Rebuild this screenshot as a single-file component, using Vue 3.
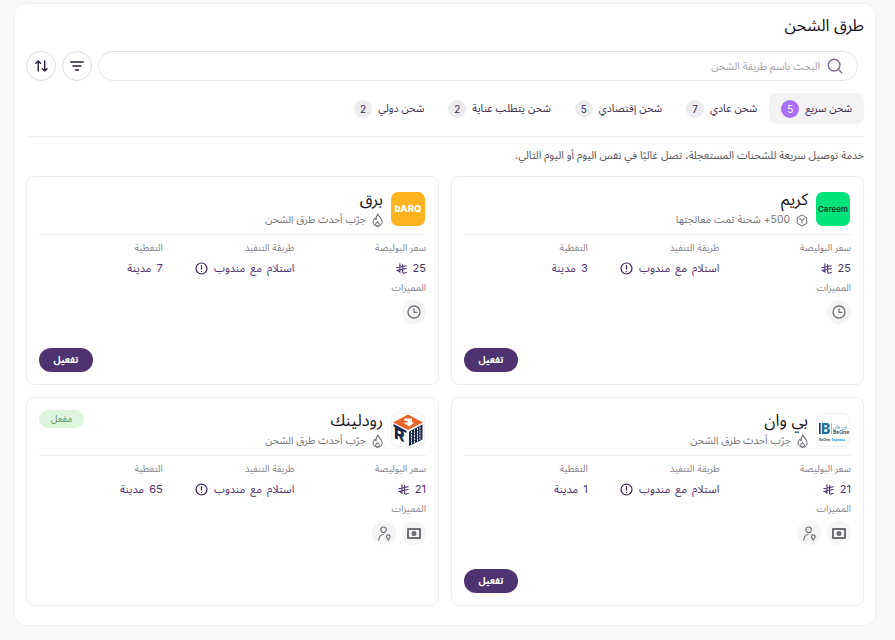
<template>
  <div class="page" dir="rtl">
    <section class="panel">
      <h1 class="title">طرق الشحن</h1>

      <div class="toolbar">
        <label class="search">
          <svg class="search-icon" viewBox="0 0 18 18" width="16" height="16" fill="none" stroke="#7d6b90" stroke-width="1.500" stroke-linecap="round">
            <circle cx="8" cy="8" r="6.600" />
            <path d="M13 13l3.600 3.600" />
          </svg>
          <input type="text" placeholder="البحث باسم طريقة الشحن" />
        </label>
        <button class="round-btn" type="button" aria-label="تصفية">
          <svg viewBox="0 0 14 10" width="14" height="10" fill="none" stroke="#2a1c38" stroke-width="1.300" stroke-linecap="round">
            <path d="M.7 1h12.600M3 5h8M5.500 9h3" />
          </svg>
        </button>
        <button class="round-btn" type="button" aria-label="ترتيب">
          <svg viewBox="0 0 14 13" width="13" height="12" fill="none" stroke="#2a1c38" stroke-width="1.500" stroke-linecap="round" stroke-linejoin="round">
            <path d="M3.500 12V1M1 3.500L3.500 1 6 3.500M10.500 1v11M8 9.500l2.500 2.500 2.500-2.500" />
          </svg>
        </button>
      </div>

      <nav class="tabs">
        <div v-for="tab in tabs" :key="tab.label" class="tab" :class="{ active: tab.active }">
          <span>{{ tab.label }}</span>
          <span class="count">{{ tab.count }}</span>
        </div>
      </nav>

      <p class="desc">خدمة توصيل سريعة للشحنات المستعجلة، تصل غالبًا في نفس اليوم أو اليوم التالي.</p>

      <div class="cards">
        <article v-for="card in cards" :key="card.name" class="card">
          <header class="card-head">
            <div class="logo" :class="card.logo">
              <template v-if="card.logo === 'careem'">Careem</template>
              <template v-else-if="card.logo === 'barq'">bARQ</template>
              <template v-else-if="card.logo === 'beone'">
                <svg viewBox="0 0 34 34" width="34" height="34">
                  <rect x="3" y="10" width="1.600" height="11" fill="#1d3c57" />
                  <text x="5" y="21" font-size="14" font-weight="800" fill="#1e6f9e">B</text>
                  <path d="M15.500 10v11" stroke="#777" stroke-width=".5" />
                  <text x="31" y="14.500" font-size="5.500" text-anchor="end" fill="#1e86b8">بي وان</text>
                  <text x="17" y="20.500" font-size="5" font-weight="600" fill="#2d3c4a">BeOne</text>
                  <text x="3" y="27.500" font-size="3.400" font-weight="600" fill="#2d3c4a">BeOne</text>
                  <text x="15.500" y="27.500" font-size="3.400" font-weight="700" fill="#27a0c9">Express</text>
                </svg>
              </template>
              <template v-else>
                <svg viewBox="0 0 34 34" width="34" height="34">
                  <path d="M17 1.500L32 9.500 17 17 2 9.500z" fill="#e8662a" />
                  <path d="M13.500 5.500h7.500v4h2.500L18 13.500l-5.500-4h4V8h-3z" fill="#fff" />
                  <text transform="matrix(1 .42 0 1 3 25)" font-size="16" font-weight="800" fill="#18264b" direction="ltr">R</text>
                  <path d="M2.500 11l13 6.700v2.400L2.500 13.500z" fill="#18264b" />
                  <path d="M18 18.500l13.500-7v15L18 33z" fill="#18264b" />
                  <path d="M20.500 18v13.500M23.500 16.500V30M26.500 15v13.500M29 13.800v13" stroke="#fff" stroke-width="1" stroke-dasharray="2 .8" />
                </svg>
              </template>
            </div>
            <div class="head-text">
              <h2 class="name">{{ card.name }}</h2>
              <div class="sub">
                <svg v-if="card.box" viewBox="0 0 14 15" width="12" height="13" fill="none" stroke="#6f6f76" stroke-width="1.200" stroke-linejoin="round">
                  <path d="M7 1l5.500 3.200v6.600L7 14l-5.500-3.200V4.200z" />
                  <path d="M3.800 5L7 7l3.200-2M7 7v4" />
                </svg>
                <svg v-else class="flame" viewBox="1 0 12 16" width="11" height="14" fill="none" stroke="#6f6f76" stroke-width="1.200" stroke-linejoin="round">
                  <path d="M7.500 1c.3 3 4.800 5 4.800 9a5.200 5.200 0 0 1-10.400 0C1.900 8.200 3 7 4 6c.2 1 .7 1.500 1.300 1.800C5.200 5.500 6 3 7.500 1z" />
                  <path d="M7 15c-1.300 0-2.200-1-2.200-2.200 0-1 .9-1.700 2.200-3 1.300 1.300 2.200 2 2.200 3C9.200 14 8.300 15 7 15z" />
                </svg>
                <span>{{ card.sub }}</span>
              </div>
            </div>
            <span v-if="card.enabled" class="badge">مفعل</span>
          </header>

          <div class="stats">
            <div class="stat">
              <span class="label">سعر البوليصة</span>
              <span class="value price">
                <span>{{ card.price }}</span>
                <svg viewBox="0 0 14 14" width="11" height="11" fill="none" stroke="#4d3270" stroke-width="1.400" stroke-linecap="round">
                  <path d="M5 1v10.500L2 9.500M8.500 2v10.500M1 6l12-2.500M1 9.500l12-2.500M9.500 13l3.500-1" />
                </svg>
              </span>
            </div>
            <div class="stat">
              <span class="label">طريقة التنفيذ</span>
              <span class="value">
                <span class="wide">استلام مع مندوب</span>
                <svg viewBox="0 0 14 14" width="13" height="13" fill="none" stroke="#3a2358" stroke-width="1.300" stroke-linecap="round">
                  <circle cx="7" cy="7" r="5.900" />
                  <path d="M7 3.800v3.800M7 10v.1" />
                </svg>
              </span>
            </div>
            <div class="stat">
              <span class="label">التغطية</span>
              <span class="value wide">{{ card.cities }} مدينة</span>
            </div>
          </div>

          <span class="label features-label">المميزات</span>
          <div class="features">
            <span v-for="f in card.features" :key="f" class="feature">
              <svg v-if="f === 'clock'" viewBox="0 0 14 14" width="14" height="14" fill="none" stroke="#6f6f76" stroke-width="1.300" stroke-linecap="round" stroke-linejoin="round">
                <circle cx="7" cy="7" r="6" />
                <path d="M7 3.800V7.300H10" />
              </svg>
              <svg v-else-if="f === 'cash'" viewBox="0 0 14 11" width="14" height="11">
                <path fill-rule="evenodd" d="M1 0h12a1 1 0 0 1 1 1v9a1 1 0 0 1-1 1H1a1 1 0 0 1-1-1V1a1 1 0 0 1 1-1zM2 2v7h10V2zM7 3a2.500 2.500 0 1 1 0 5 2.500 2.500 0 0 1 0-5z" fill="#6f6f76" />
              </svg>
              <svg v-else viewBox="0 0 16 16" width="15" height="15" fill="none" stroke="#6f6f76" stroke-width="1.200" stroke-linecap="round">
                <circle cx="7" cy="4" r="3" />
                <path d="M2 15c0-3.300 1.800-5.500 4.500-6M14 11.500a2 2 0 1 0-3 1.700L12 15l1-1.800c.6-.4 1-1 1-1.700z" />
              </svg>
            </span>
          </div>

          <button v-if="!card.enabled" class="activate" type="button">تفعيل</button>
        </article>
      </div>
    </section>
  </div>
</template>

<script setup>
const tabs = [
  { label: 'شحن سريع', count: 5, active: true },
  { label: 'شحن عادي', count: 7 },
  { label: 'شحن إقتصادي', count: 5 },
  { label: 'شحن يتطلب عناية', count: 2 },
  { label: 'شحن دولي', count: 2 }
]

const tried = 'جرّب أحدث طرق الشحن'

const cards = [
  { name: 'كريم', logo: 'careem', sub: '500+ شحنة تمت معالجتها', box: true, price: 25, cities: 3, features: ['clock'] },
  { name: 'برق', logo: 'barq', sub: tried, price: 25, cities: 7, features: ['clock'] },
  { name: 'بي وان', logo: 'beone', sub: tried, price: 21, cities: 1, features: ['cash', 'pin'] },
  { name: 'رودلينك', logo: 'roadlink', sub: tried, price: 21, cities: 65, features: ['cash', 'pin'], enabled: true }
]
</script>

<style>
html, body {
  margin: 0;
  background: #f8f8f8;
}
</style>

<style scoped>
.page {
  height: 640px;
  box-sizing: border-box;
  padding: 3px 19px 14px 14px;
  font-family: Inter, "Noto Sans Arabic", "DejaVu Sans", sans-serif;
  color: #2a1c38;
  overflow: hidden;
}
.panel {
  background: #fff;
  border-radius: 12px;
  border: 1px solid #f2f2f3;
  box-sizing: border-box;
  height: 623px;
  padding: 9px 11px 0;
}
.title {
  margin: 0;
  font-size: 16.500px;
  line-height: 24px;
  font-weight: 400;
  color: #1c1424;
}
.toolbar {
  display: flex;
  gap: 6px;
  margin-top: 14px;
}
.search {
  flex: 1;
  height: 30px;
  border: 1px solid #e6e4ea;
  border-radius: 15px;
  box-sizing: border-box;
  display: flex;
  align-items: center;
  gap: 7px;
  padding: 0 14px 0 12px;
  margin-right: 6px;
}
.search input {
  flex: 1;
  border: 0;
  outline: 0;
  background: none;
  padding: 0;
  font: inherit;
  font-size: 10.500px;
}
.search input::placeholder {
  color: #a3a1a8;
}
.round-btn {
  width: 30px;
  height: 30px;
  border-radius: 50%;
  border: 1px solid #dedce3;
  background: #fff;
  padding: 0;
  display: flex;
  align-items: center;
  justify-content: center;
}
.tabs {
  display: flex;
  margin-top: 12px;
  padding-bottom: 12px;
  border-bottom: 1px solid #f0f0f2;
}
.tab {
  display: flex;
  align-items: center;
  gap: 6px;
  height: 31px;
  padding: 0 12px;
  font-size: 10.600px;
  border-radius: 8px;
  color: #3a2a4a;
}
.tab.active {
  background: #f3f3f4;
}
.count {
  width: 18px;
  height: 18px;
  border-radius: 50%;
  background: #ececef;
  font-size: 10px;
  display: flex;
  align-items: center;
  justify-content: center;
}
.active .count {
  background: #a970f5;
  color: #fff;
}
.desc {
  margin: 11px 0 0;
  font-size: 10.700px;
  line-height: 16px;
  color: #55525c;
}
.cards {
  display: grid;
  grid-template-columns: 1fr 1fr;
  grid-auto-rows: 209px;
  gap: 12px;
  margin-top: 12px;
}
.card {
  border: 1px solid #eeeef0;
  border-radius: 8px;
  padding: 12px;
  box-sizing: border-box;
  display: flex;
  flex-direction: column;
  align-items: flex-start;
}
.card-head {
  display: flex;
  align-items: center;
  gap: 8px;
  align-self: stretch;
  padding-bottom: 6px;
  border-bottom: 1px solid #f0f0f2;
  position: relative;
}
.logo {
  width: 34px;
  height: 34px;
  margin-right: 1px;
  border-radius: 7px;
  flex: none;
  display: flex;
  align-items: center;
  justify-content: center;
  direction: ltr;
}
.careem {
  background: #00e27a;
  color: #0f3a2a;
  font-size: 8px;
  font-weight: 600;
}
.barq {
  background: #ffb31f;
  color: #fff;
  font-size: 9.500px;
  font-weight: 800;
}
.beone, .roadlink {
  background: #fff;
  box-shadow: inset 0 0 0 1px #f1f1f3;
}
.name {
  margin: 0;
  font-size: 16.500px;
  line-height: 20px;
  font-weight: 400;
  color: #1c1424;
}
.sub {
  display: flex;
  align-items: center;
  gap: 6px;
  font-size: 10.400px;
  line-height: 16px;
  color: #77747d;
  margin-top: 3px;
}
.badge {
  position: absolute;
  left: 0;
  top: 0;
  width: 45px;
  height: 18px;
  border-radius: 9px;
  background: #dcf5dc;
  color: #5e9160;
  font-size: 9.500px;
  display: flex;
  align-items: center;
  justify-content: center;
}
.stats {
  display: grid;
  grid-template-columns: repeat(3, 1fr);
  gap: 8px;
  align-self: stretch;
  margin-top: 6px;
}
.stat {
  display: flex;
  flex-direction: column;
  gap: 5px;
}
.label {
  font-size: 9.500px;
  line-height: 14px;
  color: #85828b;
}
.value {
  display: flex;
  align-items: center;
  gap: 6px;
  font-size: 11px;
  line-height: 16px;
  color: #4d3270;
}
.wide {
  word-spacing: 2px;
}
.features-label {
  margin-top: 5px;
}
.features {
  display: flex;
  gap: 6px;
  margin-top: 5px;
}
.feature {
  width: 24px;
  height: 24px;
  border-radius: 50%;
  background: #f5f5f6;
  display: flex;
  align-items: center;
  justify-content: center;
}
.activate {
  margin-top: auto;
  align-self: flex-end;
  width: 54px;
  height: 24px;
  border: 0;
  border-radius: 12px;
  background: #4f3370;
  color: #fff;
  font: inherit;
  font-size: 9.500px;
  font-weight: 700;
}
</style>
